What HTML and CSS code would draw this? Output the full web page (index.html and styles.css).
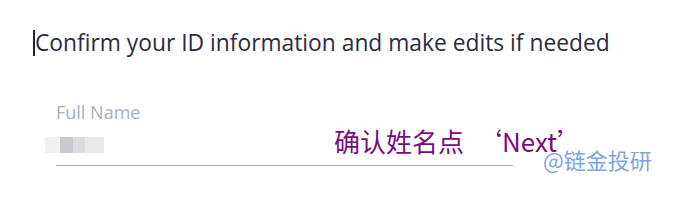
FILE: index.html
```html
<!DOCTYPE html>
<html lang="en">
<head>
    <meta charset="UTF-8">
    <meta name="viewport" content="width=device-width, initial-scale=1.0">
    <title>Confirm ID</title>
    <link rel="stylesheet" href="styles.css">
</head>
<body>
<div class="page">
    <h2 class="title"><span class="caret"></span>Confirm your ID information and make edits if needed</h2>
    <div class="field">
        <label class="field-label">Full Name</label>
        <div class="field-value">
            <span class="blur b1"></span><span class="blur b2"></span><span class="blur b3"></span><span class="blur b4"></span>
        </div>
    </div>
    <div class="note">确认姓名点<span class="next">‘Next’</span></div>
    <div class="mark">@链金投研</div>
</div>
</body>
</html>
```

FILE: styles.css
```css
body {
    margin: 0;
    padding: 0;
    background: #fff;
    font-family: "Open Sans", Arial, sans-serif;
}
.page {
    position: relative;
    width: 681px;
    height: 205px;
    padding: 26px 0 0 33px;
    box-sizing: border-box;
}
.title {
    margin: 0;
    font-size: 22.8px;
    font-weight: 400;
    color: #2b2c3f;
    line-height: 34px;
    display: flex;
    align-items: center;
}
.caret {
    display: inline-block;
    width: 2px;
    height: 26px;
    background: #1f2230;
}
.field {
    margin: 40px 0 0 23px;
    width: 457px;
    border-bottom: 1px solid #a3a9b8;
    padding-bottom: 12px;
}
.field-label {
    display: block;
    font-size: 18px;
    color: #a8afc3;
    line-height: 24px;
}
.field-value {
    display: flex;
    height: 16px;
    margin: 13px 0 0 -11px;
}
.blur {
    display: block;
    height: 16px;
}
.b1 { width: 15px; background: #f0f1f2; }
.b2 { width: 13px; background: #c8cbce; }
.b3 { width: 12px; background: #dadcdf; }
.b4 { width: 19px; background: #e8e9eb; }
.note {
    position: absolute;
    left: 334px;
    top: 124px;
    font-family: "Noto Sans CJK SC", "Noto Sans", sans-serif;
    font-size: 26px;
    line-height: 34px;
    color: #7a0c7f;
}
.next {
    margin-left: 12px;
}
.mark {
    position: absolute;
    left: 543px;
    top: 144px;
    font-family: "Noto Sans CJK SC", "Noto Sans", sans-serif;
    font-size: 22px;
    line-height: 30px;
    color: #7aa6e6;
}
```
